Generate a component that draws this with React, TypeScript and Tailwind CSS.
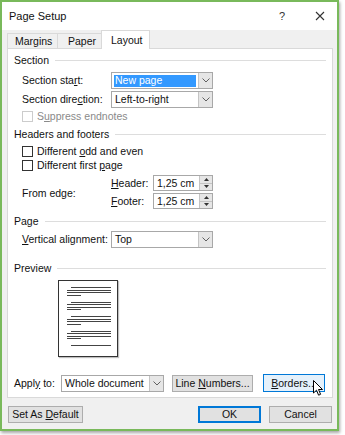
import React from 'react';

const font = { fontFamily: '"Liberation Sans", Arial, sans-serif' };

function U({ children }: { children: React.ReactNode }) {
  return <span className="underline underline-offset-[1px]">{children}</span>;
}

function Chevron() {
  return (
    <svg width="8" height="5" viewBox="0 0 8 5">
      <path d="M0.5 0.5 L4 4 L7.5 0.5" fill="none" stroke="#606060" strokeWidth="1" />
    </svg>
  );
}

function Select({ value, w, selected }: { value: string; w: string; selected?: boolean }) {
  return (
    <div className={`flex h-[17px] ${w} border border-[#a8a8a8] bg-white`}>
      <div className="flex flex-1 items-center px-[2px]">
        <span
          className={`flex h-[12px] w-full items-center px-[1px] ${
            selected ? 'bg-[#3399ff] text-white' : 'text-[#111]'
          }`}
        >
          {value}
        </span>
      </div>
      <div className="flex w-[14px] items-center justify-center border-l border-[#c4c4c4] bg-[#e6e6e6]">
        <Chevron />
      </div>
    </div>
  );
}

function Spinner({ value }: { value: string }) {
  return (
    <div className="flex h-[16px] w-[60px] border border-[#a8a8a8] bg-white">
      <div className="flex flex-1 items-center px-[3px] text-[#111]">{value}</div>
      <div className="flex w-[13px] flex-col border-l border-[#c4c4c4] bg-[#e6e6e6]">
        <div className="flex flex-1 items-center justify-center border-b border-[#c4c4c4]">
          <svg width="5" height="3" viewBox="0 0 5 3">
            <path d="M0 3 L2.5 0 L5 3 Z" fill="#333" />
          </svg>
        </div>
        <div className="flex flex-1 items-center justify-center">
          <svg width="5" height="3" viewBox="0 0 5 3">
            <path d="M0 0 L2.5 3 L5 0 Z" fill="#333" />
          </svg>
        </div>
      </div>
    </div>
  );
}

function Heading({ label, className }: { label: string; className: string }) {
  return (
    <div className={`flex h-[14px] items-center gap-[6px] pl-[6px] pr-[6px] ${className}`}>
      <span className="text-[#111]">{label}</span>
      <div className="h-px flex-1 bg-[#dddddd]" />
    </div>
  );
}

function Check({ label, disabled, className }: { label: React.ReactNode; disabled?: boolean; className: string }) {
  return (
    <div className={`flex h-[12px] items-center gap-[4px] pl-[14px] ${className}`}>
      <div className={`h-[11px] w-[11px] border bg-white ${disabled ? 'border-[#cccccc]' : 'border-[#333]'}`} />
      <span className={disabled ? 'text-[#8a8a8a]' : 'text-[#111]'}>{label}</span>
    </div>
  );
}

function Button({ children, className }: { children: React.ReactNode; className: string }) {
  return (
    <div className={`flex items-center justify-center text-[#111] ${className}`}>
      <span>{children}</span>
    </div>
  );
}

function PreviewPage() {
  const block = (
    <div className="flex flex-col gap-[1.5px]">
      <div className="ml-[12px] h-px w-[40px] bg-[#444]" />
      <div className="ml-[8px] h-px w-[44px] bg-[#444]" />
      <div className="ml-[8px] h-px w-[44px] bg-[#444]" />
      <div className="ml-[8px] h-px w-[14px] bg-[#444]" />
    </div>
  );
  return (
    <div className="ml-[50px] mt-[5px] flex h-[77px] w-[60px] flex-col gap-[6px] border border-[#333] bg-white pt-[6px] shadow-[1px_1px_1px_rgba(0,0,0,0.25)]">
      {block}
      {block}
      {block}
      {block}
      <div className="ml-[12px] h-px w-[40px] bg-[#444]" />
    </div>
  );
}

export default function App() {
  return (
    <div className="h-[435px] w-[345px] overflow-hidden bg-white text-[10.5px] leading-none" style={font}>
      <div className="flex h-[431px] w-[339px] flex-col border-2 border-[#79b95b] bg-white shadow-[1px_2px_3px_rgba(0,0,0,0.35)]">
        <div className="flex h-[28px] items-center pl-[7px] pr-[12px]">
          <span className="flex-1 text-[11px] text-[#111]">Page Setup</span>
          <span className="mr-[30px] text-[11px] text-[#333]">?</span>
          <svg width="10" height="10" viewBox="0 0 10 10">
            <path d="M1 1 L9 9 M9 1 L1 9" stroke="#333" strokeWidth="1.1" />
          </svg>
        </div>

        <div className="flex flex-1 flex-col bg-[#f0f0f0] px-[5px]">
          <div className="flex h-[18px] items-end">
            <div className="flex h-[15px] w-[50px] items-center border-l border-t border-[#d9d9d9] pl-[7px] text-[#111]">Margins</div>
            <div className="flex h-[15px] w-[44px] items-center border-l border-t border-[#d9d9d9] pl-[10px] text-[#111]">Paper</div>
            <div className="-mb-px z-10 flex h-[19px] w-[49px] items-center border-x border-t border-[#d9d9d9] bg-white pl-[9px] text-[#111]">Layout</div>
          </div>

          <div className="flex h-[350px] w-[326px] flex-col border border-[#d9d9d9] bg-white">
            <Heading label="Section" className="mt-[4px]" />
            <div className="mt-[5px] flex h-[17px] items-center pl-[14px]">
              <span className="w-[89px] text-[#111]">Section sta<U>r</U>t:</span>
              <Select value="New page" w="w-[102px]" selected />
            </div>
            <div className="mt-[2px] flex h-[17px] items-center pl-[14px]">
              <span className="w-[89px] text-[#111]">Section dire<U>c</U>tion:</span>
              <Select value="Left-to-right" w="w-[102px]" />
            </div>
            <Check label={<>S<U>u</U>ppress endnotes</>} disabled className="mt-[2px]" />
            <Heading label="Headers and footers" className="mt-[5px]" />
            <Check label={<>Different <U>o</U>dd and even</>} className="mt-[4px]" />
            <Check label={<>Different first <U>p</U>age</>} className="mt-[2px]" />
            <div className="mt-[4px] flex h-[34px] items-center pl-[14px]">
              <span className="mt-[2px] w-[89px] text-[#111]">From edge:</span>
              <div className="flex flex-col gap-[2px]">
                <div className="flex items-center">
                  <span className="w-[42px] text-[#111]"><U>H</U>eader:</span>
                  <Spinner value="1,25 cm" />
                </div>
                <div className="flex items-center">
                  <span className="w-[42px] text-[#111]"><U>F</U>ooter:</span>
                  <Spinner value="1,25 cm" />
                </div>
              </div>
            </div>
            <Heading label="Page" className="mt-[5px]" />
            <div className="mt-[3px] flex h-[17px] items-center pl-[14px]">
              <span className="w-[89px] text-[#111]"><U>V</U>ertical alignment:</span>
              <Select value="Top" w="w-[102px]" />
            </div>
            <Heading label="Preview" className="mt-[13px]" />
            <PreviewPage />
            <div className="relative mt-[17px] flex h-[18px] items-center pl-[6px]">
              <span className="w-[47px] text-[#111]">Appl<U>y</U> to:</span>
              <Select value="Whole document" w="w-[103px]" />
              <Button className="ml-[8px] h-[17px] w-[81px] border border-[#adadad] bg-[#e1e1e1]">
                Line <U>N</U>umbers...
              </Button>
              <Button className="ml-[10px] h-[18px] w-[62px] border border-[#0078d7] bg-[#e5f1fb]">
                <U>B</U>orders...
              </Button>
              <svg className="absolute left-[305px] top-[6px]" width="11" height="17" viewBox="0 0 11 17">
                <path d="M0.5 0.5 L0.5 13 L3.5 10.2 L5.6 15.2 L7.6 14.3 L5.5 9.5 L9.5 9.5 Z" fill="white" stroke="#000" strokeWidth="1" strokeLinejoin="round" />
              </svg>
            </div>
          </div>

          <div className="mt-[8px] flex h-[17px] items-center">
            <Button className="ml-[1px] h-[17px] w-[75px] border border-[#adadad] bg-[#e1e1e1]">
              Set As <U>D</U>efault
            </Button>
            <Button className="ml-auto h-[17px] w-[63px] border-2 border-[#0078d7] bg-[#e1e1e1]">
              OK
            </Button>
            <Button className="ml-[8px] h-[17px] w-[63px] border border-[#adadad] bg-[#e1e1e1]">
              Cancel
            </Button>
          </div>
        </div>
      </div>
    </div>
  );
}
